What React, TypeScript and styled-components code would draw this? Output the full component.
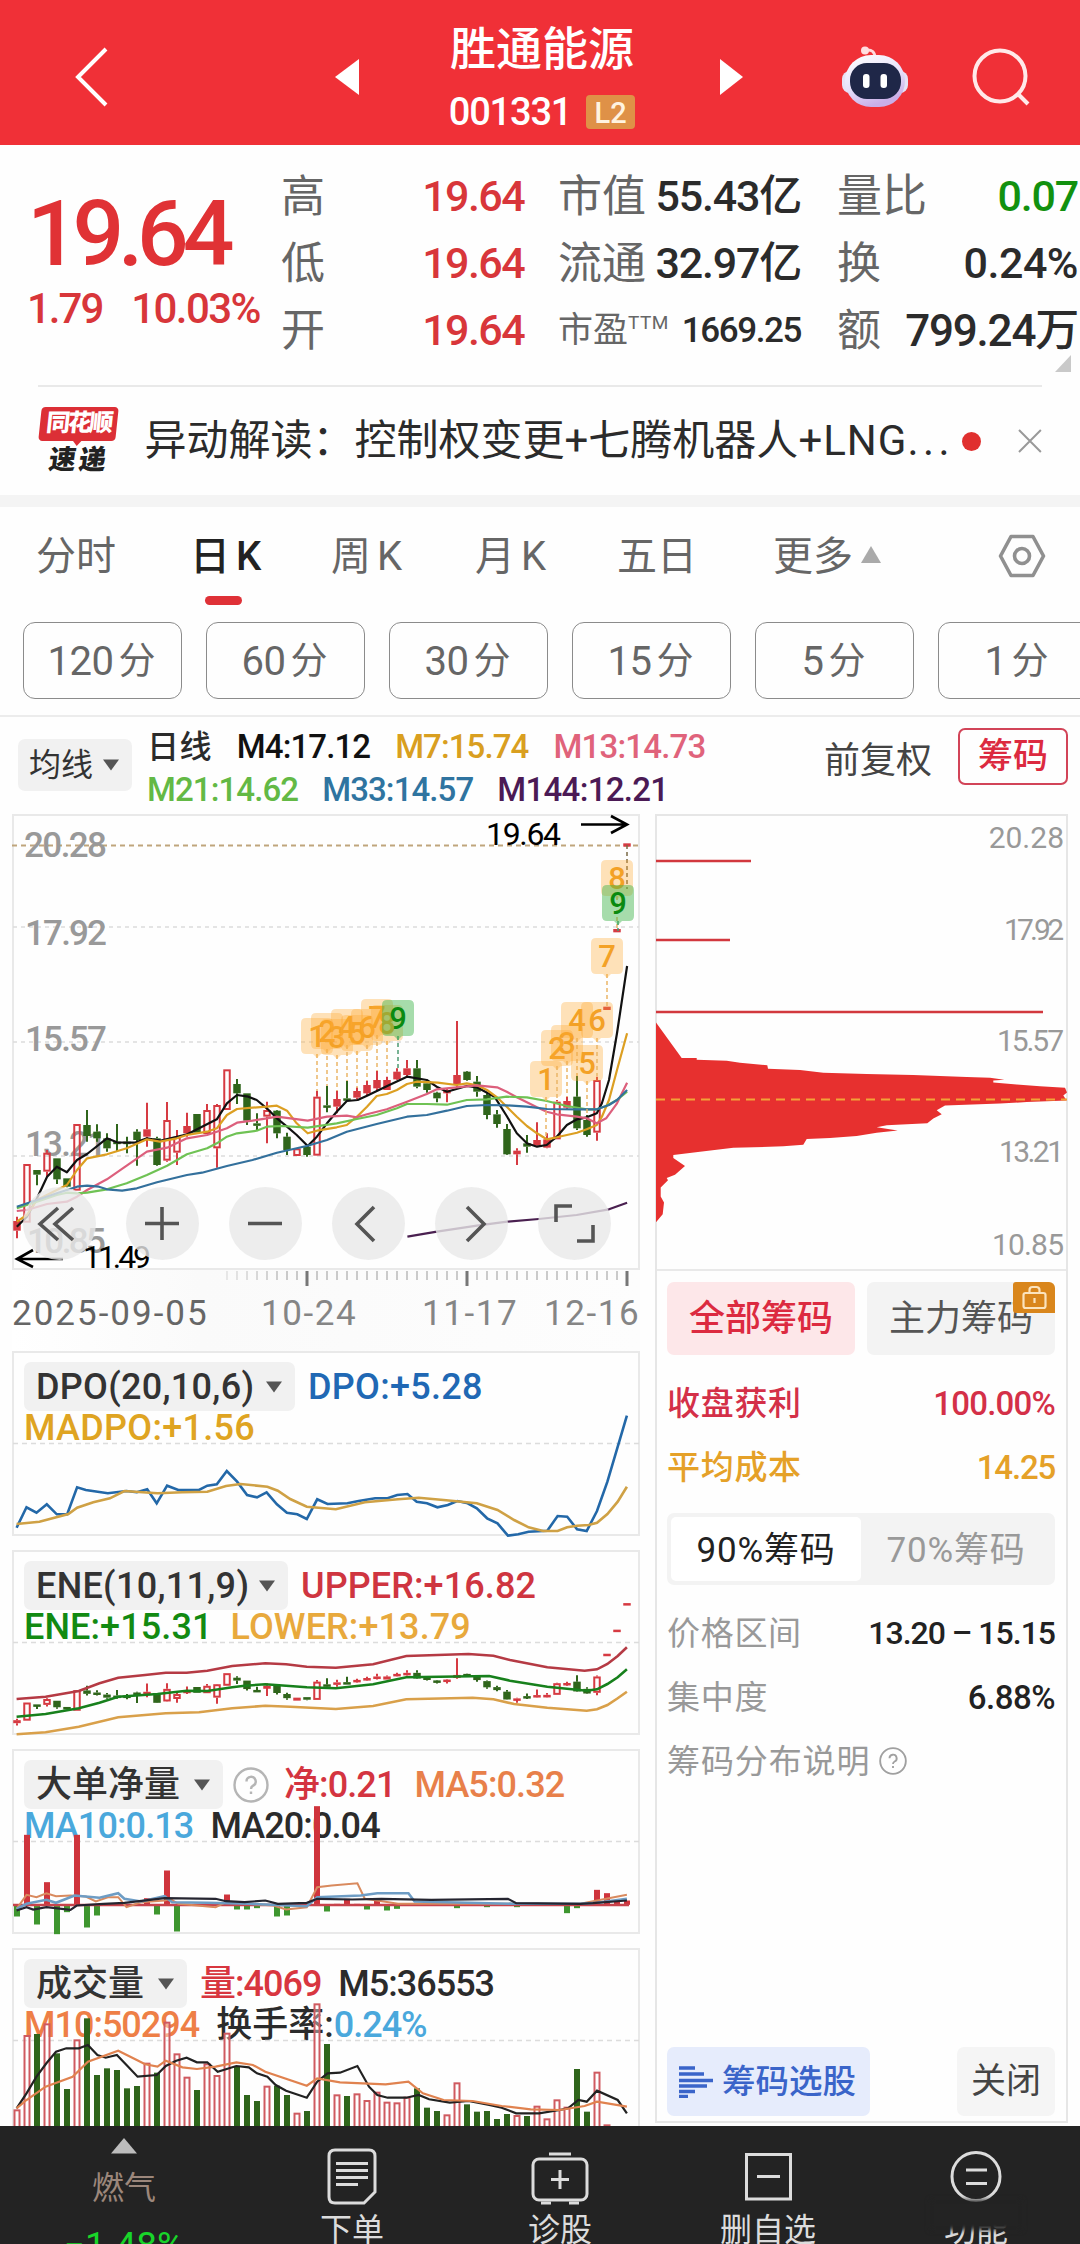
import React from 'react';
import styled, { createGlobalStyle, css } from 'styled-components';

const FONT = "Roboto, 'Noto Sans CJK SC', sans-serif";

const Global = createGlobalStyle`
  * { box-sizing: border-box; }
  html, body { margin: 0; padding: 0; background: #fff; }
  body { font-family: ${FONT}; color: #2b2b2b; width: 1080px; height: 2244px; overflow: hidden; }
`;

const Page = styled.div`
  width: 1080px;
  height: 2244px;
  overflow: hidden;
  display: flex;
  flex-direction: column;
  background: #fefefe;
`;

/* ---------- text ---------- */

interface TxtProps {
  $size: number;
  $color?: string;
  $weight?: number;
  $ls?: number;
}

const Txt = styled.span<TxtProps>`
  font-size: ${(p) => p.$size}px;
  line-height: 1;
  color: ${(p) => p.$color ?? 'inherit'};
  font-weight: ${(p) => p.$weight ?? 400};
  letter-spacing: ${(p) => p.$ls ?? 0}px;
  white-space: nowrap;
`;

/* ---------- header ---------- */

const Header = styled.header`
  height: 145px;
  flex: none;
  background: #f03037;
  color: #fff;
  display: flex;
  align-items: center;
  padding: 8px 40px 0 75px;
`;

const TitleBlock = styled.div`
  width: 364px;
  height: 137px;
  flex: none;
  padding: 18px 0 0 2px;
  display: flex;
  flex-direction: column;
  align-items: center;
`;

const CodeRow = styled.div`
  display: flex;
  align-items: center;
  gap: 15px;
  margin-top: 21px;
`;

const LevelBadge = styled.span`
  width: 49px;
  height: 34px;
  border-radius: 4px;
  background: #df9147;
  color: #fff3e0;
  font-size: 29px;
  font-weight: 500;
  line-height: 36px;
  text-align: center;
`;

const HeaderIcon = styled.svg<{ $ml: number }>`
  display: block;
  flex: none;
  margin-left: ${(p) => p.$ml}px;
`;

/* ---------- quote ---------- */

const Quote = styled.section`
  height: 240px;
  flex: none;
  display: grid;
  grid-template-columns: 281px 243px 34px 243px 36px 241px;
  position: relative;
`;

const PriceBlock = styled.div`
  padding: 44px 0 0 27px;
`;

const ChangeRow = styled.div`
  display: flex;
  gap: 29px;
  padding-top: 8px;
`;

const QuoteColumn = styled.div<{ $col: number }>`
  grid-column: ${(p) => p.$col};
  display: grid;
  grid-template-rows: repeat(3, 67px);
  padding-top: 18px;
`;

const QuoteCell = styled.div`
  display: flex;
  align-items: center;
  justify-content: space-between;
`;

const Sup = styled.sup`
  font-size: 19px;
  line-height: 1;
  vertical-align: 13px;
  letter-spacing: 0.5px;
`;

const Corner = styled.svg`
  position: absolute;
  right: 9px;
  bottom: 13px;
`;

/* ---------- news ---------- */

const News = styled.section`
  height: 110px;
  flex: none;
  margin: 0 38px;
  border-top: 2px solid #e9e9e9;
  display: flex;
  align-items: center;
`;

const NewsLogo = styled.div`
  width: 82px;
  height: 68px;
  display: flex;
  flex-direction: column;
  align-items: center;
`;

const LogoTop = styled.div`
  width: 77px;
  height: 34px;
  flex: none;
  background: #dc2f36;
  border-radius: 4px;
  transform: skewX(-6deg);
  color: #fff;
  font-size: 24px;
  font-weight: 900;
  line-height: 33px;
  letter-spacing: -2.5px;
  text-align: center;
  position: relative;
  &::after {
    content: '';
    position: absolute;
    left: 34px;
    top: 33px;
    border: 5px solid transparent;
    border-top: 6px solid #dc2f36;
  }
`;

const LogoBottom = styled.div`
  color: #222;
  font-size: 27px;
  font-weight: 900;
  line-height: 38px;
  letter-spacing: 3px;
  transform: skewX(-8deg);
`;

const NewsText = styled.div`
  margin-left: 25px;
  width: 812px;
  font-size: 42px;
  line-height: 60px;
  white-space: nowrap;
`;

const Latin = styled.span<{ $ls: number }>`
  letter-spacing: ${(p) => p.$ls}px;
`;

const Dot = styled.i`
  width: 19px;
  height: 19px;
  border-radius: 50%;
  background: #e0302f;
  margin-right: 37px;
  margin-left: 8px;
  flex: none;
`;

const Band = styled.div`
  height: 12px;
  flex: none;
  background: #f4f4f4;
`;

/* ---------- tabs ---------- */

const Tabs = styled.nav`
  height: 115px;
  flex: none;
  display: flex;
  align-items: flex-start;
  padding: 20px 0 0 36px;
`;

const Tab = styled.div<{ $active?: boolean; $w: number }>`
  width: ${(p) => p.$w}px;
  flex: none;
  font-size: 40px;
  line-height: 60px;
  height: 80px;
  color: ${(p) => (p.$active ? '#222' : '#666')};
  font-weight: ${(p) => (p.$active ? 500 : 400)};
  white-space: nowrap;
  display: flex;
  gap: 6px;
  position: relative;
  ${(p) =>
    p.$active &&
    css`
      &::after {
        content: '';
        position: absolute;
        left: 15px;
        top: 69px;
        width: 37px;
        height: 9px;
        border-radius: 5px;
        background: #df3137;
      }
    `}
`;

const TabIcon = styled.svg`
  display: block;
  margin: 7px 0 0;
`;

const Pills = styled.div`
  height: 95px;
  flex: none;
  display: flex;
  gap: 24px;
  padding-left: 23px;
  border-bottom: 2px solid #ececec;
  overflow: hidden;
`;

const Pill = styled.div`
  width: 159px;
  height: 77px;
  flex: none;
  border: 1.5px solid #8b8b8b;
  border-radius: 12px;
  display: flex;
  align-items: center;
  justify-content: center;
  gap: 5px;
  padding: 2px 2px 0 0;
  color: #666;
`;

/* ---------- moving averages ---------- */

const MaBar = styled.section`
  height: 97px;
  flex: none;
  display: flex;
  padding-left: 18px;
`;

const Drop = styled.div<{ $w: number; $h: number; $pl: number; $mt?: number }>`
  width: ${(p) => p.$w}px;
  height: ${(p) => p.$h}px;
  margin-top: ${(p) => p.$mt ?? 0}px;
  padding: 0 13px 0 ${(p) => p.$pl}px;
  background: #f1f1f1;
  border-radius: 7px;
  display: flex;
  align-items: center;
  justify-content: space-between;
  flex: none;
`;

const MaLines = styled.div`
  width: 620px;
  padding: 8px 0 0 15px;
`;

const MaRow = styled.div<{ $gap: number }>`
  display: flex;
  align-items: center;
  gap: ${(p) => p.$gap}px;
  height: 43px;
`;

const MaRight = styled.div`
  display: flex;
  margin-left: 72px;
  padding-top: 11px;
  gap: 26px;
`;

const AdjustLabel = styled.div`
  font-size: 36px;
  line-height: 66px;
  color: #444;
`;

const ChipToggle = styled.div`
  width: 110px;
  height: 57px;
  border: 2px solid #d24458;
  border-radius: 7px;
  color: #dc2a40;
  font-size: 35px;
  font-weight: 500;
  line-height: 54px;
  text-align: center;
`;

/* ---------- main columns ---------- */

const Columns = styled.main`
  height: 1312px;
  flex: none;
  display: flex;
  gap: 15px;
  padding: 0 12px;
  overflow: hidden;
`;

const Left = styled.div`
  width: 628px;
  flex: none;
  display: flex;
  flex-direction: column;
`;

const Panel = styled.div<{ $h: number }>`
  height: ${(p) => p.$h}px;
  flex: none;
  border: 2px solid #e9e9e9;
  position: relative;
`;

const Plot = styled.svg`
  position: absolute;
  left: -2px;
  top: -2px;
  overflow: visible;
  pointer-events: none;
`;

const Controls = styled.div`
  position: absolute;
  left: 9px;
  top: 371px;
  display: flex;
  gap: 30px;
`;

const RoundBtn = styled.div`
  width: 73px;
  height: 73px;
  border-radius: 50%;
  background: rgba(233, 233, 233, 0.8);
  svg {
    display: block;
  }
`;

const Axis = styled.div`
  height: 81px;
  flex: none;
  background: linear-gradient(90deg, #fff 0%, #fafafa 30%, #fdfdfd 100%);
  svg {
    display: block;
  }
`;

const Dates = styled.div`
  display: flex;
  padding-top: 4px;
`;

const DateLabel = styled.span<{ $w: number; $dark?: boolean; $ls: number }>`
  width: ${(p) => p.$w}px;
  font-size: 35px;
  line-height: 40px;
  letter-spacing: ${(p) => p.$ls}px;
  color: ${(p) => (p.$dark ? '#666' : '#858585')};
  white-space: nowrap;
`;

const SubPanels = styled.div`
  display: flex;
  flex-direction: column;
  gap: 14px;
`;

const IndHead = styled.div<{ $gap: number }>`
  display: flex;
  align-items: center;
  gap: ${(p) => p.$gap}px;
  padding: 9px 0 0 10px;
`;

const IndRow = styled.div<{ $gap: number }>`
  display: flex;
  align-items: center;
  gap: ${(p) => p.$gap}px;
  height: 33px;
  padding-left: 10px;
`;

/* ---------- right panel ---------- */

const Right = styled.aside`
  width: 413px;
  height: 1309px;
  flex: none;
  border: 2px solid #e6e6e6;
  display: flex;
  flex-direction: column;
`;

const ChipPlot = styled.div`
  height: 455px;
  flex: none;
  border-bottom: 2px solid #e9e9e9;
  position: relative;
`;

const ChipBody = styled.div`
  flex: 1;
  display: flex;
  flex-direction: column;
  padding: 11px 11px 5px 10px;
`;

const ButtonPair = styled.div`
  display: flex;
  gap: 12px;
`;

const ChipButton = styled.div<{ $on?: boolean }>`
  flex: 1;
  height: 73px;
  border-radius: 7px;
  background: ${(p) => (p.$on ? '#fde7e9' : '#f3f3f3')};
  color: ${(p) => (p.$on ? '#dc2a40' : '#555')};
  font-weight: ${(p) => (p.$on ? 500 : 400)};
  font-size: 36px;
  line-height: 74px;
  text-align: center;
  position: relative;
`;

const Lock = styled.div`
  position: absolute;
  right: 0;
  top: 0;
  width: 42px;
  height: 31px;
  border-radius: 3px 6px 0 3px;
  background: #d9861c;
  svg {
    display: block;
  }
`;

const KV = styled.div<{ $mt?: number }>`
  display: flex;
  align-items: center;
  justify-content: space-between;
  height: 64px;
  margin-top: ${(p) => p.$mt ?? 0}px;
`;

const Segment = styled.div`
  height: 72px;
  margin-top: 14px;
  border-radius: 7px;
  background: #f3f3f3;
  padding: 4px;
  display: flex;
`;

const Seg = styled.div<{ $on?: boolean }>`
  flex: 1;
  border-radius: 5px;
  background: ${(p) => (p.$on ? '#fff' : 'transparent')};
  color: ${(p) => (p.$on ? '#222' : '#999')};
  font-size: 35px;
  line-height: 67px;
  text-align: center;
  letter-spacing: 0.8px;
`;

const HelpRow = styled.div`
  display: flex;
  align-items: center;
  gap: 9px;
  height: 64px;
`;

const Footer = styled.div`
  margin-top: auto;
  display: flex;
  justify-content: space-between;
`;

const PickButton = styled.div`
  width: 203px;
  height: 69px;
  border-radius: 7px;
  background: #e6ecfc;
  color: #3a64c9;
  display: flex;
  align-items: center;
  gap: 9px;
  padding-left: 12px;
`;

const CloseButton = styled.div`
  width: 98px;
  height: 69px;
  border-radius: 7px;
  background: #f5f5f5;
  color: #444;
  font-size: 35px;
  line-height: 69px;
  text-align: center;
`;

/* ---------- bottom bar ---------- */

const BottomBar = styled.footer`
  height: 118px;
  flex: none;
  background: #232323;
  display: flex;
  position: relative;
  overflow: hidden;
`;

const NavItem = styled.div<{ $w: number }>`
  width: ${(p) => p.$w}px;
  flex: none;
  display: flex;
  flex-direction: column;
  align-items: center;
  color: #dcdcdc;
  padding-top: 20px;
  font-size: 32px;
  line-height: 40px;
  white-space: nowrap;
  svg {
    display: block;
    flex: none;
    margin-bottom: 4px;
  }
`;

const Sector = styled.div`
  width: 248px;
  flex: none;
  display: flex;
  flex-direction: column;
  align-items: center;
  padding-top: 12px;
  svg {
    display: block;
    flex: none;
  }
`;

const SectorName = styled.div`
  flex: none;
  margin-top: 14px;
  font-size: 32px;
  line-height: 40px;
  color: #9c877b;
`;

const SectorChange = styled.div`
  flex: none;
  margin-top: 17px;
  font-size: 37px;
  line-height: 42px;
  color: #19d52a;
`;

const Smudge = styled.div`
  position: absolute;
  left: 930px;
  top: 74px;
  width: 92px;
  height: 30px;
  background: #232323;
  filter: blur(2.5px);
`;

/* ---------- data ---------- */

type P = [number, number];
type Candle = [string, number, number, number, number];

// colour/kind, high, body top, body bottom, low
const candles: Candle[] = [
  ['r', 650, 663, 692, 715], ['h', 492, 492, 668, 668], ['g', 510, 510, 524, 556], ['h', 450, 458, 515, 530],
  ['g', 475, 475, 538, 552], ['g', 535, 535, 560, 562], ['h', 372, 372, 572, 572], ['g', 330, 375, 408, 425],
  ['g', 373, 395, 415, 425], ['g', 400, 415, 445, 455], ['g', 372, 425, 431, 455], ['g', 410, 425, 431, 460],
  ['g', 388, 395, 420, 497], ['r', 308, 388, 410, 440], ['g', 410, 415, 495, 497], ['h', 306, 360, 482, 485],
  ['h', 390, 410, 458, 495], ['r', 338, 378, 400, 410], ['g', 342, 342, 398, 398], ['h', 312, 330, 402, 402],
  ['h', 312, 315, 445, 503], ['h', 208, 208, 330, 330], ['g', 237, 252, 280, 312], ['g', 280, 280, 362, 375],
  ['g', 340, 370, 377, 390], ['h', 305, 330, 350, 430], ['g', 330, 332, 400, 415], ['g', 398, 410, 450, 465],
  ['h', 445, 445, 468, 468], ['g', 440, 440, 465, 470], ['h', 273, 290, 467, 467], ['g', 258, 316, 321, 337],
  ['r', 272, 297, 320, 340], ['g', 243, 295, 301, 301], ['r', 262, 273, 293, 298], ['r', 243, 255, 280, 285],
  ['r', 213, 240, 265, 270], ['r', 230, 240, 270, 270], ['r', 205, 215, 238, 240], ['r', 180, 205, 225, 230],
  ['g', 180, 205, 260, 265], ['g', 240, 250, 270, 278], ['g', 275, 278, 295, 307], ['r', 265, 270, 280, 307],
  ['r', 63, 225, 255, 262], ['g', 213, 215, 240, 242], ['g', 228, 245, 275, 290], ['g', 280, 285, 345, 358],
  ['g', 330, 343, 372, 383], ['g', 372, 387, 463, 465], ['r', 445, 452, 463, 495], ['g', 405, 430, 440, 458],
  ['r', 367, 420, 437, 440], ['r', 400, 418, 443, 445], ['h', 300, 305, 418, 418], ['r', 290, 303, 323, 330],
  ['g', 228, 290, 385, 390], ['g', 345, 360, 405, 410], ['h', 230, 240, 398, 422], ['r', 20, 20, 30, 30],
  ['r', -213, -213, -203, -203], ['r', -470, -470, -460, -460],
];

const ma4: P[] = [[40, 680], [64, 650], [88, 595], [112, 530], [135, 500], [159, 517], [183, 480], [207, 462], [254, 415], [278, 427], [320, 428], [349, 415], [380, 422], [420, 410], [445, 403], [480, 380], [515, 358], [539, 310], [563, 285], [590, 290], [610, 300], [634, 325], [658, 355], [682, 380], [705, 405], [731, 438], [753, 410], [777, 370], [800, 335], [824, 303], [850, 300], [872, 287], [920, 258], [967, 230], [1014, 240], [1040, 262], [1062, 275], [1109, 258], [1133, 262], [1175, 290], [1204, 348], [1228, 400], [1252, 430], [1276, 440], [1299, 435], [1323, 410], [1347, 375], [1371, 358], [1394, 352], [1418, 340], [1430, 310], [1447, 240], [1466, 100], [1490, -102]];
const ma7: P[] = [[40, 665], [64, 645], [88, 600], [135, 570], [159, 555], [183, 510], [207, 475], [254, 463], [301, 445], [349, 418], [380, 425], [420, 415], [444, 405], [492, 395], [515, 385], [539, 345], [563, 327], [600, 323], [634, 320], [658, 317], [682, 332], [705, 370], [731, 400], [753, 392], [800, 382], [824, 375], [848, 350], [872, 320], [895, 288], [919, 282], [943, 270], [967, 252], [990, 245], [1040, 248], [1085, 255], [1109, 250], [1133, 256], [1157, 270], [1181, 292], [1204, 320], [1228, 350], [1252, 378], [1276, 400], [1299, 418], [1323, 412], [1371, 398], [1394, 388], [1418, 375], [1430, 350], [1447, 300], [1466, 210], [1490, 100]];
const ma13: P[] = [[40, 633], [64, 630], [112, 612], [159, 605], [183, 590], [207, 570], [254, 538], [301, 497], [349, 455], [397, 443], [444, 415], [492, 405], [515, 395], [539, 385], [563, 368], [600, 362], [634, 355], [658, 350], [690, 355], [731, 362], [777, 350], [824, 347], [848, 352], [872, 343], [919, 328], [967, 305], [1014, 282], [1038, 268], [1085, 262], [1133, 256], [1181, 262], [1204, 275], [1228, 292], [1276, 322], [1299, 335], [1323, 343], [1371, 350], [1394, 355], [1418, 370], [1440, 355], [1466, 310], [1490, 248]];
const ma21: P[] = [[40, 625], [88, 605], [135, 585], [159, 578], [183, 580], [207, 578], [254, 568], [301, 550], [349, 525], [397, 497], [444, 463], [492, 445], [515, 430], [539, 410], [563, 400], [610, 392], [634, 380], [670, 378], [731, 383], [800, 370], [848, 357], [895, 345], [943, 325], [967, 312], [1014, 312], [1062, 314], [1109, 300], [1157, 298], [1204, 290], [1252, 292], [1299, 303], [1347, 318], [1394, 328], [1418, 328], [1440, 318], [1466, 300], [1490, 275]];
const ma33: P[] = [[40, 620], [88, 600], [135, 580], [183, 560], [207, 557], [235, 560], [254, 568], [290, 572], [325, 565], [373, 547], [444, 525], [480, 518], [539, 498], [600, 480], [658, 458], [731, 437], [777, 420], [824, 395], [895, 372], [967, 350], [1014, 345], [1062, 332], [1109, 318], [1157, 315], [1204, 316], [1252, 320], [1300, 327], [1371, 328], [1418, 328], [1447, 315], [1466, 300], [1490, 270]];
const ma144: P[] = [[968, 710], [1038, 695], [1133, 677], [1205, 665], [1280, 657], [1370, 645], [1447, 628], [1490, 608]];

const dpo: P[] = [[40, 563], [64, 502], [88, 518], [113, 493], [137, 523], [162, 523], [186, 442], [207, 450], [260, 460], [305, 453], [330, 457], [355, 448], [378, 490], [403, 437], [430, 450], [480, 450], [500, 437], [523, 433], [547, 393], [572, 425], [596, 465], [620, 472], [643, 457], [668, 493], [692, 518], [717, 523], [740, 537], [765, 478], [790, 492], [838, 490], [865, 483], [905, 475], [935, 475], [958, 465], [983, 462], [1005, 485], [1030, 490], [1055, 502], [1080, 495], [1103, 483], [1128, 490], [1150, 505], [1175, 535], [1200, 550], [1225, 587], [1250, 583], [1275, 575], [1320, 572], [1345, 528], [1368, 530], [1392, 568], [1415, 573], [1440, 513], [1465, 425], [1512, 227]];
const madpo: P[] = [[40, 552], [95, 545], [165, 522], [186, 503], [225, 487], [265, 475], [300, 453], [380, 460], [440, 457], [500, 455], [545, 438], [580, 432], [645, 440], [670, 452], [700, 477], [740, 500], [810, 508], [880, 487], [960, 478], [1010, 473], [1070, 480], [1150, 490], [1200, 510], [1240, 540], [1275, 562], [1310, 573], [1345, 573], [1368, 562], [1392, 557], [1420, 555], [1440, 548], [1465, 522], [1490, 485], [1512, 440]];

const eneUp: P[] = [[40, 1077], [110, 1070], [190, 1053], [240, 1030], [285, 1013], [350, 1005], [400, 998], [450, 998], [500, 992], [560, 978], [640, 970], [690, 973], [740, 980], [810, 983], [900, 973], [980, 948], [1130, 942], [1190, 947], [1230, 960], [1320, 982], [1410, 992], [1440, 988], [1465, 972], [1490, 948], [1512, 922]];
const eneMid: P[] = [[40, 1130], [110, 1122], [190, 1105], [240, 1088], [285, 1070], [380, 1062], [450, 1052], [500, 1053], [560, 1042], [590, 1037], [640, 1033], [690, 1037], [740, 1042], [810, 1045], [900, 1033], [980, 1012], [1180, 1008], [1230, 1022], [1320, 1040], [1415, 1052], [1440, 1048], [1465, 1032], [1490, 1012], [1512, 988]];
const eneLow: P[] = [[40, 1183], [110, 1177], [190, 1160], [285, 1132], [400, 1120], [480, 1117], [560, 1105], [640, 1097], [700, 1100], [810, 1107], [900, 1098], [980, 1078], [1140, 1073], [1190, 1078], [1240, 1092], [1320, 1103], [1415, 1112], [1440, 1108], [1465, 1095], [1490, 1075], [1512, 1055]];

const netBars: Record<number, number> = {
  0: 528, 1: 283, 2: 552, 3: 425, 4: 581, 5: 515, 6: 283, 7: 561, 8: 525, 13: 473, 14: 522, 15: 390, 16: 573,
  21: 462, 22: 507, 23: 507, 24: 503, 26: 528, 27: 525, 30: 197, 31: 513, 33: 475, 35: 507, 36: 478, 37: 510, 38: 505,
  44: 503, 47: 500, 50: 500, 55: 518, 56: 503, 58: 448, 59: 458, 60: 483, 61: 480,
};
const net5: P[] = [[40, 505], [64, 463], [88, 470], [112, 458], [135, 467], [170, 465], [207, 468], [231, 483], [260, 470], [285, 470], [305, 500], [340, 485], [397, 480], [410, 475], [430, 490], [520, 500], [545, 485], [600, 490], [660, 495], [690, 507], [740, 500], [765, 440], [800, 435], [862, 428], [880, 475], [910, 480], [960, 490], [1085, 490], [1300, 490], [1400, 490], [1440, 480], [1512, 463]];
const net10: P[] = [[40, 505], [64, 490], [112, 478], [135, 487], [180, 465], [240, 472], [285, 458], [300, 475], [340, 483], [397, 467], [415, 485], [500, 487], [600, 490], [740, 497], [765, 470], [870, 465], [910, 458], [985, 458], [1000, 483], [1240, 490], [1400, 490], [1440, 487], [1512, 475]];
const net20: P[] = [[40, 510], [64, 500], [80, 507], [112, 500], [170, 508], [185, 495], [250, 490], [300, 487], [397, 473], [520, 475], [545, 482], [590, 485], [640, 480], [670, 490], [740, 487], [765, 475], [850, 477], [920, 475], [1040, 478], [1225, 475], [1245, 488], [1400, 490], [1430, 488], [1512, 480]];

const volumes =
  'r1108 r885 g882 r850 g940 g1047 r898 g835 g1005 g985 g990 g1045 g1038 r968 g998 r845 r940 r1010 g1050 r970 r1005 r878 g978 g1065 g1083 r1037 g1037 g1065 r1118 g1113 r790 g912 r1063 g1068 r1060 r1080 r1055 r1085 r1087 r1070 g1045 g1103 g1113 r1123 r1027 g1093 g1115 g1113 g1137 g1122 r1125 g1128 r1097 r1135 r1078 r1100 g987 g1115 r995 r1153'.split(' ');
const vol5: P[] = [[40, 1105], [64, 1060], [88, 1010], [112, 970], [135, 935], [160, 925], [190, 925], [212, 915], [235, 945], [255, 953], [282, 945], [305, 975], [332, 1010], [378, 1005], [400, 978], [425, 962], [450, 953], [475, 967], [500, 967], [525, 995], [570, 978], [600, 982], [620, 1000], [645, 1010], [665, 1035], [690, 1052], [740, 1073], [765, 1025], [790, 1000], [820, 998], [862, 978], [890, 1040], [910, 1065], [935, 1073], [980, 1073], [1010, 1065], [1035, 1078], [1085, 1088], [1130, 1083], [1180, 1095], [1210, 1103], [1245, 1120], [1300, 1120], [1350, 1110], [1370, 1105], [1395, 1080], [1415, 1085], [1440, 1052], [1490, 1080], [1512, 1120]];
const vol10: P[] = [[40, 1105], [64, 1080], [110, 1040], [175, 1010], [212, 965], [285, 932], [330, 960], [350, 973], [380, 980], [400, 962], [440, 982], [475, 987], [520, 980], [570, 967], [610, 975], [640, 995], [740, 1037], [765, 1015], [820, 1027], [930, 1033], [985, 1025], [1020, 1060], [1070, 1080], [1140, 1083], [1210, 1098], [1280, 1108], [1350, 1110], [1410, 1098], [1440, 1085], [1512, 1100]];

const chipShape: P[] = [[48, 765], [125, 855], [170, 855], [170, 859], [260, 862], [300, 867], [382, 873], [384, 882], [480, 885], [550, 892], [680, 895], [820, 898], [980, 903], [1050, 905], [1093, 910], [1060, 912], [1060, 917], [1130, 922], [1200, 926], [1275, 930], [1281, 942], [1270, 950], [1280, 962], [1160, 966], [1080, 970], [915, 975], [890, 987], [905, 997], [880, 1008], [862, 1020], [740, 1025], [710, 1030], [773, 1038], [710, 1044], [650, 1052], [570, 1057], [500, 1060], [490, 1074], [430, 1078], [280, 1082], [180, 1092], [100, 1100], [100, 1108], [135, 1128], [105, 1150], [80, 1158], [84, 1164], [62, 1182], [62, 1205], [72, 1220], [68, 1250], [48, 1270]];

const barX = (i: number) => 5 + 10 * i;
const line = (data: P[], sx: number, dy: number, sy = 3, dx = -12) =>
  data.map(([x, y]) => `${(x / sx + dx).toFixed(1)},${(y / sy + dy).toFixed(1)}`).join(' ');

const RED = '#d63a42';
const GREEN = '#2f651b';

function Candles({ y, w }: { y: (v: number) => number; w: number }) {
  return (
    <g>
      {candles.map(([k, hi, top, bot, lo], i) => {
        const x = barX(i);
        const c = k === 'g' ? GREEN : RED;
        const h = Math.max(y(bot) - y(top), 2.5);
        return (
          <g key={i} stroke={c} strokeWidth={2}>
            <path d={`M${x} ${y(hi)}V${y(top)}M${x} ${y(bot)}V${y(lo)}`} />
            {k === 'h' ? (
              <rect x={x - w / 2 + 1} y={y(top) + 1} width={w - 2} height={Math.max(h - 2, 1)} fill="none" />
            ) : (
              <rect x={x - w / 2} y={y(top)} width={w} height={h} fill={c} stroke="none" />
            )}
          </g>
        );
      })}
    </g>
  );
}

// digit, centre x, centre y, stem end y
const marks: [string, number, number, number][] = [
  ['1', 305, 222, 277], ['2', 315, 217, 272], ['3', 325, 223, 277], ['4', 335, 213, 267], ['5', 345, 219, 274],
  ['6', 355, 213, 267], ['7', 365, 203, 257], ['8', 375, 209, 262],
  ['1', 534, 265, 322], ['2', 545, 234, 288], ['3', 555, 229, 283], ['4', 565, 206, 262], ['5', 575, 249, 301],
  ['6', 585, 206, 262], ['7', 595, 142, 194], ['8', 605, 64, 116],
  ['9', 386, 204, 255], ['9', 606, 89, 117],
];

const LABEL = { fontFamily: FONT };

function MainPlot() {
  return (
    <Plot width="628" height="455" viewBox="0 0 628 455" fill="none">
      {[113, 228, 342].map((y) => (
        <path key={y} d={`M1 ${y}H627`} stroke="#dcdcdc" strokeWidth="1.5" strokeDasharray="4 4" />
      ))}
      <path d="M0 31.5H627" stroke="#bfa57c" strokeWidth="2" strokeDasharray="5 4" />
      <g fill="#999" fontSize="35" fontWeight="500" style={LABEL}>
        <text x="12" y="43" textLength="83">20.28</text>
        <text x="13" y="131" textLength="82">17.92</text>
        <text x="13" y="237" textLength="82">15.57</text>
        <text x="13" y="342" textLength="82">13.21</text>
        <text x="15" y="439" textLength="79">10.85</text>
      </g>
      <Candles y={(v) => 186 + v / 3} w={7.5} />
      <g strokeWidth="2.2" strokeLinejoin="round">
        <polyline points={line(ma144, 2.376, 186)} stroke="#4a2050" />
        <polyline points={line(ma4, 2.376, 186)} stroke="#111" />
        <polyline points={line(ma7, 2.376, 186)} stroke="#dc9f22" />
        <polyline points={line(ma13, 2.376, 186)} stroke="#dc5f7c" />
        <polyline points={line(ma21, 2.376, 186)} stroke="#6fc254" />
        <polyline points={line(ma33, 2.376, 186)} stroke="#33709c" />
      </g>
      <path d="M615 31V75" stroke="#7a6a45" strokeWidth="1.5" strokeDasharray="4 3" />
      {marks.map(([n, x, y, end], i) => {
        const green = n === '9';
        return (
          <g key={i}>
            <path
              d={`M${x} ${y + 18}V${end}`}
              stroke={green ? '#4c9a72' : '#eab567'}
              strokeWidth="1.5"
              strokeDasharray="4 3"
            />
            <path
              d={`M${x - 11} ${y - 18}h22q5 0 5 5v26q0 5 -5 5h-7l-4 4l-4 -4h-7q-5 0 -5 -5v-26q0 -5 5 -5z`}
              fill={green ? 'rgba(60,180,70,.45)' : 'rgba(255,170,50,.34)'}
            />
            <text x={x} y={y + 11} fontSize="31" textAnchor="middle" style={LABEL} fontWeight={500} fill={green ? '#0a8a10' : '#f3a126'}>
              {n}
            </text>
          </g>
        );
      })}
      <g stroke="#000" strokeWidth="2.6">
        <path d="M569 10.500H615M599 2L615 10.500L599 19" />
        <path d="M51 445H5M21 436L5 445L21 453" />
      </g>
      <g fill="#000" fontSize="32" style={LABEL}>
        <text x="474" y="31" textLength="75">19.64</text>
        <text x="71" y="454" textLength="68">11.49</text>
      </g>
    </Plot>
  );
}

const Caret = ({ w = 16, c = '#555' }: { w?: number; c?: string }) => (
  <svg width={w} height="12" viewBox="0 0 16 12">
    <path d="M0 0.500H16L8 11.500Z" fill={c} />
  </svg>
);

const Help = ({ r, c }: { r: number; c: string }) => (
  <svg width={r * 2} height={r * 2} viewBox="0 0 36 36" fill="none" stroke={c} strokeWidth="2.4">
    <circle cx="18" cy="18" r="16.500" />
    <path d="M13.500 14.500a4.600 4.600 0 1 1 6.600 4.100c-1.500.8-2.100 1.600-2.100 3.400M18 24.500v2.500" />
  </svg>
);

const controls = [
  'M35 21L17 37L35 53M50 21L32 37L50 53',
  'M19 36.500H53M36 20V53',
  'M19 36.500H53',
  'M42 20L25 37L42 54',
  'M32 20L49 37L32 54',
  'M18 35V19H34M39 54H55V38',
];

interface IndicatorProps {
  name: string;
  w: number;
  gap: number;
  firstGap?: number;
  first: [string, string][];
  second: [string, string][];
  gap2: number;
  ls: number;
  nameLs?: number;
  help?: boolean;
  children: React.ReactNode;
}

const HeadValues = styled.div<{ $gap: number; $help?: boolean }>`
  display: flex;
  align-items: center;
  gap: ${(p) => p.$gap}px;
  padding-left: ${(p) => (p.$help ? 5 : 0)}px;
`;

function Indicator({ name, w, gap, firstGap = 18, first, second, gap2, ls, nameLs = 0, help, children }: IndicatorProps) {
  return (
    <Panel $h={185}>
      <IndHead $gap={gap}>
        <Drop $w={w} $h={49} $pl={12}>
          <Txt $size={36} $color="#333" $weight={500} $ls={nameLs}>{name}</Txt>
          <Caret />
        </Drop>
        {help && <Help r={18} c="#b5b5b5" />}
        <HeadValues $gap={firstGap} $help={help}>
          {first.map(([t, c]) => (
            <Txt key={t} $size={36} $color={c} $weight={500} $ls={ls}>{t}</Txt>
          ))}
        </HeadValues>
      </IndHead>
      <IndRow $gap={gap2}>
        {second.map(([t, c]) => {
          const cut = t.startsWith('换手率') ? t.indexOf(':') + 1 : 0;
          return (
            <Txt key={t} $size={36} $color={c} $weight={500} $ls={ls}>
              {cut ? <Txt $size={36} $color="#2b2b2b" $weight={500}>{t.slice(0, cut)}</Txt> : null}
              {t.slice(cut)}
            </Txt>
          );
        })}
      </IndRow>
      <Plot width="628" height="185" viewBox="0 0 628 185" fill="none">
        <path d="M1 92.500H627" stroke="#dcdcdc" strokeWidth="1.500" strokeDasharray="5 4" />
        {children}
      </Plot>
    </Panel>
  );
}

const quoteA = [['高', '19.64'], ['低', '19.64'], ['开', '19.64']];

export default function App() {
  return (
    <>
      <Global />
      <Page>
        <Header>
          <HeaderIcon $ml={0} width="34" height="60" viewBox="0 0 34 60" fill="none" stroke="#fff" strokeWidth="4">
            <path d="M31 2L3 30L31 58" />
          </HeaderIcon>
          <HeaderIcon $ml={226} width="24" height="36" viewBox="0 0 24 36">
            <path d="M24 0V36L0 18Z" fill="#fff" />
          </HeaderIcon>
          <TitleBlock>
            <Txt $size={46} $weight={500}>胜通能源</Txt>
            <CodeRow>
              <Txt $size={38} $weight={500} $ls={-1.2}>001331</Txt>
              <LevelBadge>L2</LevelBadge>
            </CodeRow>
          </TitleBlock>
          <HeaderIcon $ml={-3} width="24" height="36" viewBox="0 0 24 36">
            <path d="M0 0V36L23 18Z" fill="#fff" />
          </HeaderIcon>
          <HeaderIcon $ml={97} width="68" height="64" viewBox="0 0 68 64">
            <defs>
              <linearGradient id="shell" x1="0" y1="0" x2="0.400" y2="1">
                <stop offset="0" stopColor="#fff" />
                <stop offset="0.600" stopColor="#e6e0fa" />
                <stop offset="1" stopColor="#c9aee8" />
              </linearGradient>
            </defs>
            <path d="M25 5q9 -1 9 8" stroke="#ffd9dc" strokeWidth="3" fill="none" />
            <circle cx="24" cy="5.500" r="4" fill="#ffdde0" />
            <rect x="1" y="26" width="66" height="22" rx="8" fill="#e6e2f6" />
            <rect x="4" y="10" width="60" height="52" rx="26" fill="url(#shell)" />
            <rect x="9" y="18" width="51" height="36" rx="17" fill="#1f2748" />
            <rect x="22" y="29" width="6.500" height="14" rx="3" fill="#fff" />
            <rect x="39.500" y="29" width="6.500" height="14" rx="3" fill="#fff" />
          </HeaderIcon>
          <HeaderIcon $ml={63} width="60" height="58" viewBox="0 0 60 58" fill="none" stroke="#ffe9e9" strokeWidth="4">
            <circle cx="28" cy="28" r="25.500" />
            <path d="M46 46L56 56" />
          </HeaderIcon>
        </Header>

        <Quote>
          <PriceBlock>
            <Txt $size={91} $color="#e03235" $weight={500} $ls={-6.2}>19.64</Txt>
            <ChangeRow>
              <Txt $size={42} $color="#d8363a" $weight={500} $ls={-2}>1.79</Txt>
              <Txt $size={42} $color="#d8363a" $weight={500} $ls={-1.6}>10.03%</Txt>
            </ChangeRow>
          </PriceBlock>
          <QuoteColumn $col={2}>
            {quoteA.map(([k, v]) => (
              <QuoteCell key={k}>
                <Txt $size={44} $color="#666">{k}</Txt>
                <Txt $size={43} $color="#d8363a" $weight={500} $ls={-1.6}>{v}</Txt>
              </QuoteCell>
            ))}
          </QuoteColumn>
          <QuoteColumn $col={4}>
            <QuoteCell>
              <Txt $size={44} $color="#666">市值</Txt>
              <Txt $size={43} $weight={500} $ls={-1.2}>55.43亿</Txt>
            </QuoteCell>
            <QuoteCell>
              <Txt $size={44} $color="#666">流通</Txt>
              <Txt $size={43} $weight={500} $ls={-1.2}>32.97亿</Txt>
            </QuoteCell>
            <QuoteCell>
              <Txt $size={35} $color="#666">市盈<Sup>TTM</Sup></Txt>
              <Txt $size={35} $weight={500} $ls={-1.4}>1669.25</Txt>
            </QuoteCell>
          </QuoteColumn>
          <QuoteColumn $col={6}>
            <QuoteCell>
              <Txt $size={45} $color="#666">量比</Txt>
              <Txt $size={43} $color="#12910f" $weight={500} $ls={-1.2}>0.07</Txt>
            </QuoteCell>
            <QuoteCell>
              <Txt $size={44} $color="#666">换</Txt>
              <Txt $size={43} $weight={500} $ls={-0.5}>0.24%</Txt>
            </QuoteCell>
            <QuoteCell>
              <Txt $size={44} $color="#666">额</Txt>
              <Txt $size={44} $weight={500} $ls={-1.2}>799.24万</Txt>
            </QuoteCell>
          </QuoteColumn>
          <Corner width="16" height="17" viewBox="0 0 16 17">
            <path d="M16 0V17H0Z" fill="#c9c9c9" />
          </Corner>
        </Quote>

        <News>
          <NewsLogo>
            <LogoTop>同花顺</LogoTop>
            <LogoBottom>速递</LogoBottom>
          </NewsLogo>
          <NewsText>
            异动解读：控制权变更+七腾机器人<Latin $ls={1}>+LNG</Latin><Latin $ls={4.5}>...</Latin>
          </NewsText>
          <Dot />
          <svg width="24" height="24" viewBox="0 0 24 24" stroke="#999" strokeWidth="2">
            <path d="M1 1L23 23M23 1L1 23" />
          </svg>
        </News>
        <Band />

        <Tabs>
          <Tab $w={154}>分时</Tab>
          <Tab $w={141} $active>日<span>K</span></Tab>
          <Tab $w={144}>周<span>K</span></Tab>
          <Tab $w={142}>月<span>K</span></Tab>
          <Tab $w={156}>五日</Tab>
          <Tab $w={224}>
            更多
            <svg width="22" height="60" viewBox="0 0 22 60">
              <path d="M12 19L22 36H2Z" fill="#aaa" />
            </svg>
          </Tab>
          <TabIcon width="50" height="44" viewBox="0 0 50 44" fill="none" stroke="#909090" strokeWidth="3.600">
            <path d="M14 2.500H36L46.500 22L36 41.500H14L3.500 22Z" strokeLinejoin="round" />
            <circle cx="25" cy="22" r="7.500" />
          </TabIcon>
        </Tabs>

        <Pills>
          {['120', '60', '30', '15', '5', '1'].map((n) => (
            <Pill key={n}>
              <Txt $size={40} $ls={-0.5}>{n}</Txt>
              <Txt $size={37}>分</Txt>
            </Pill>
          ))}
        </Pills>

        <MaBar>
          <Drop $w={114} $h={52} $pl={11} $mt={22}>
            <Txt $size={32} $color="#333">均线</Txt>
            <Caret />
          </Drop>
          <MaLines>
            <MaRow $gap={25}>
              <Txt $size={32} $weight={500} $ls={0.4}>日线</Txt>
              <Txt $size={33} $color="#111" $weight={500} $ls={-0.9}>M4:17.12</Txt>
              <Txt $size={33} $color="#d99f20" $weight={500} $ls={-0.9}>M7:15.74</Txt>
              <Txt $size={33} $color="#e0637b" $weight={500} $ls={-0.8}>M13:14.73</Txt>
            </MaRow>
            <MaRow $gap={24}>
              <Txt $size={33} $color="#63b945" $weight={500} $ls={-0.9}>M21:14.62</Txt>
              <Txt $size={33} $color="#2f74a0" $weight={500} $ls={-0.9}>M33:14.57</Txt>
              <Txt $size={33} $color="#4b1a55" $weight={500} $ls={-0.7}>M144:12.21</Txt>
            </MaRow>
          </MaLines>
          <MaRight>
            <AdjustLabel>前复权</AdjustLabel>
            <ChipToggle>筹码</ChipToggle>
          </MaRight>
        </MaBar>

        <Columns>
          <Left>
            <Panel $h={456}>
              <MainPlot />
              <Controls>
                {controls.map((d) => (
                  <RoundBtn key={d}>
                    <svg width="73" height="73" viewBox="0 0 73 73" fill="none" stroke="#555" strokeWidth="3.600">
                      <path d={d} />
                    </svg>
                  </RoundBtn>
                ))}
              </Controls>
            </Panel>
            <Axis>
              <svg width="628" height="20" viewBox="0 0 628 20">
                {Array.from({ length: 41 }, (_, k) => k + 21).map((i) =>
                  (i - 29) % 16 === 0 ? (
                    <path key={i} d={`M${barX(i)} 1V16`} stroke="#777" strokeWidth="3" />
                  ) : (
                    <path key={i} d={`M${barX(i)} 1V10`} stroke="#999" strokeWidth="1" opacity={Math.min(1, (i - 17) / 10)} />
                  ),
                )}
              </svg>
              <Dates>
                <DateLabel $w={249} $ls={2} $dark>2025-09-05</DateLabel>
                <DateLabel $w={161} $ls={1.6}>10-24</DateLabel>
                <DateLabel $w={122} $ls={1.6}>11-17</DateLabel>
                <DateLabel $w={96} $ls={1.6}>12-16</DateLabel>
              </Dates>
            </Axis>
            <SubPanels>
              <Indicator
                name="DPO(20,10,6)" w={271} gap={13} gap2={20} ls={0.3} nameLs={0.3}
                first={[['DPO:+5.28', '#2068b4']]}
                second={[['MADPO:+1.56', '#dfa422']]}
              >
                <polyline points={line(dpo, 2.412, -11)} stroke="#2368a8" strokeWidth="2.600" />
                <polyline points={line(madpo, 2.412, -11)} stroke="#cfa145" strokeWidth="2.600" />
              </Indicator>
              <Indicator
                name="ENE(10,11,9)" w={264} gap={13} gap2={18} ls={0.1} nameLs={0.3}
                first={[['UPPER:+16.82', '#cf3540']]}
                second={[['ENE:+15.31', '#128a12'], ['LOWER:+13.79', '#e8a93c']]}
              >
                <Candles y={(v) => (935 + 0.31 * v) / 3 - 210} w={7.5} />
                <polyline points={line(eneUp, 2.412, -210)} stroke="#b53a44" strokeWidth="2.600" />
                <polyline points={line(eneMid, 2.412, -210)} stroke="#17801c" strokeWidth="2.600" />
                <polyline points={line(eneLow, 2.412, -210)} stroke="#d9a04a" strokeWidth="2.600" />
              </Indicator>
              <Indicator
                name="大单净量" w={199} gap={10} firstGap={19} gap2={17} ls={-0.9} help
                first={[['净:0.21', '#d43440'], ['MA5:0.32', '#e8804a']]}
                second={[['MA10:0.13', '#4aa8dc'], ['MA20:0.04', '#2b2b2b']]}
              >
                {Array.from({ length: 62 }, (_, i) => {
                  const v = netBars[i] ?? 490;
                  const up = v <= 493;
                  return (
                    <rect
                      key={i}
                      x={barX(i) - 3}
                      y={(up ? v : 493) / 3 - 8.5}
                      width="6"
                      height={Math.max(Math.abs(v - 493) / 3, 2)}
                      fill={up ? '#cf343c' : '#3e962f'}
                    />
                  );
                })}
                <path d="M1 156H617" stroke="#c8434c" strokeWidth="2.500" />
                <polyline points={line(net5, 2.412, -8.5)} stroke="#d98a5e" strokeWidth="2" />
                <polyline points={line(net10, 2.412, -8.5)} stroke="#6d9cc4" strokeWidth="2.600" />
                <polyline points={line(net20, 2.412, -8.5)} stroke="#252530" strokeWidth="2.200" />
              </Indicator>
              <Indicator
                name="成交量" w={163} gap={13} firstGap={17} gap2={17} ls={-1}
                first={[['量:4069', '#d8363f'], ['M5:36553', '#2b2b2b']]}
                second={[['M10:50294', '#ee7f46'], ['换手率:0.24%', '#4aa8dc']]}
              >
                {volumes.map((s, i) => {
                  const top = Number(s.slice(1)) / 3 - 208;
                  return s[0] === 'g' ? (
                    <rect key={i} x={barX(i) - 3} y={top} width="6" height={180 - top} fill={GREEN} />
                  ) : (
                    <rect key={i} x={barX(i) - 2.5} y={top + 1} width="5" height={182 - top} stroke="#cf5a60" strokeWidth="2" fill="rgba(255,255,255,.4)" />
                  );
                })}
                <polyline points={line(vol5, 2.412, -208)} stroke="#222" strokeWidth="2.200" />
                <polyline points={line(vol10, 2.412, -208)} stroke="#e0824f" strokeWidth="2.200" />
              </Indicator>
            </SubPanels>
          </Left>

          <Right>
            <ChipPlot>
              <Plot width="413" height="456" viewBox="0 0 413 456" fill="none">
                <path d="M1 47H96M1 126H75M1 198H388" stroke="#d2383e" strokeWidth="2.600" />
                <polygon points={line(chipShape, 3, -94, 2.529, -15)} fill="#e7302f" />
                <path d="M1 285.500H412" stroke="#f2a338" strokeWidth="2" strokeDasharray="9 6" />
                <g fill="#999" fontSize="30" textAnchor="end" style={LABEL}>
                  <text x="409" y="34">20.28</text>
                  <text x="409" y="126" textLength="60">17.92</text>
                  <text x="409" y="237" textLength="67">15.57</text>
                  <text x="409" y="348" textLength="65">13.21</text>
                  <text x="409" y="441" textLength="72">10.85</text>
                </g>
              </Plot>
            </ChipPlot>
            <ChipBody>
              <ButtonPair>
                <ChipButton $on>全部筹码</ChipButton>
                <ChipButton>
                  主力筹码
                  <Lock>
                    <svg width="42" height="31" viewBox="0 0 42 31" fill="none" stroke="#fbe3bd" strokeWidth="2.200">
                      <rect x="10.500" y="11" width="22" height="15" rx="2" />
                      <path d="M16.500 11V8a3 3 0 0 1 3-3h4a3 3 0 0 1 3 3v3M21.500 16v5" />
                    </svg>
                  </Lock>
                </ChipButton>
              </ButtonPair>
              <KV $mt={16}>
                <Txt $size={33} $color="#d43048" $weight={500} $ls={0.7}>收盘获利</Txt>
                <Txt $size={33} $color="#d43048" $weight={500} $ls={-0.8}>100.00%</Txt>
              </KV>
              <KV>
                <Txt $size={33} $color="#e5a128" $weight={500} $ls={0.7}>平均成本</Txt>
                <Txt $size={33} $color="#e5a128" $weight={500} $ls={-1.2}>14.25</Txt>
              </KV>
              <Segment>
                <Seg $on>90%筹码</Seg>
                <Seg>70%筹码</Seg>
              </Segment>
              <KV $mt={16}>
                <Txt $size={33} $color="#999" $ls={0.7}>价格区间</Txt>
                <Txt $size={32} $color="#222" $weight={500} $ls={-1}>13.20 – 15.15</Txt>
              </KV>
              <KV>
                <Txt $size={33} $color="#999" $ls={0.7}>集中度</Txt>
                <Txt $size={33} $color="#222" $weight={500} $ls={-0.5}>6.88%</Txt>
              </KV>
              <HelpRow>
                <Txt $size={33} $color="#999" $ls={0.9}>筹码分布说明</Txt>
                <Help r={14} c="#a0a0a0" />
              </HelpRow>
              <Footer>
                <PickButton>
                  <svg width="34" height="32" viewBox="0 0 34 32" stroke="#3a64c9" strokeWidth="3.600">
                    <path d="M0 2H16M0 8H25M0 14.500H34M0 20H28M0 25.500H16M0 30.500H9" />
                  </svg>
                  <Txt $size={33.5} $weight={500}>筹码选股</Txt>
                </PickButton>
                <CloseButton>关闭</CloseButton>
              </Footer>
            </ChipBody>
          </Right>
        </Columns>

        <BottomBar>
          <Sector>
            <svg width="26" height="16" viewBox="0 0 26 16">
              <path d="M13 0L26 15.500H0Z" fill="#bdbdbd" />
            </svg>
            <SectorName>燃气</SectorName>
            <SectorChange>−1.48%</SectorChange>
          </Sector>
          <NavItem $w={208}>
            <svg width="52" height="60" viewBox="0 0 52 60" fill="none" stroke="#dcdcdc" strokeWidth="3">
              <path d="M9 4H43Q49 4 49 10V46L38 57H9Q3 57 3 51V10Q3 4 9 4ZM10 17.500H42M10 24.500H42M10 31.500H42M10 38.500H32" />
            </svg>
            下单
          </NavItem>
          <NavItem $w={208}>
            <svg width="60" height="60" viewBox="0 0 60 60" fill="none" stroke="#dcdcdc" strokeWidth="3">
              <rect x="3" y="13" width="54" height="41" rx="6" />
              <path d="M19 8H41M21 33.500H39M30 24V43M11 57H21M39 57H49" />
            </svg>
            诊股
          </NavItem>
          <NavItem $w={208}>
            <svg width="60" height="60" viewBox="0 0 60 60" fill="none" stroke="#dcdcdc" strokeWidth="3">
              <path d="M8.500 8.500H52.500V53H8.500ZM19 30.500H42" />
            </svg>
            删自选
          </NavItem>
          <NavItem $w={208}>
            <svg width="60" height="60" viewBox="0 0 60 60" fill="none" stroke="#dcdcdc" strokeWidth="3">
              <circle cx="30" cy="30.500" r="24" />
              <path d="M20 24H41M20 37.500H41" />
            </svg>
            功能
          </NavItem>
          <Smudge />
        </BottomBar>
      </Page>
    </>
  );
}
